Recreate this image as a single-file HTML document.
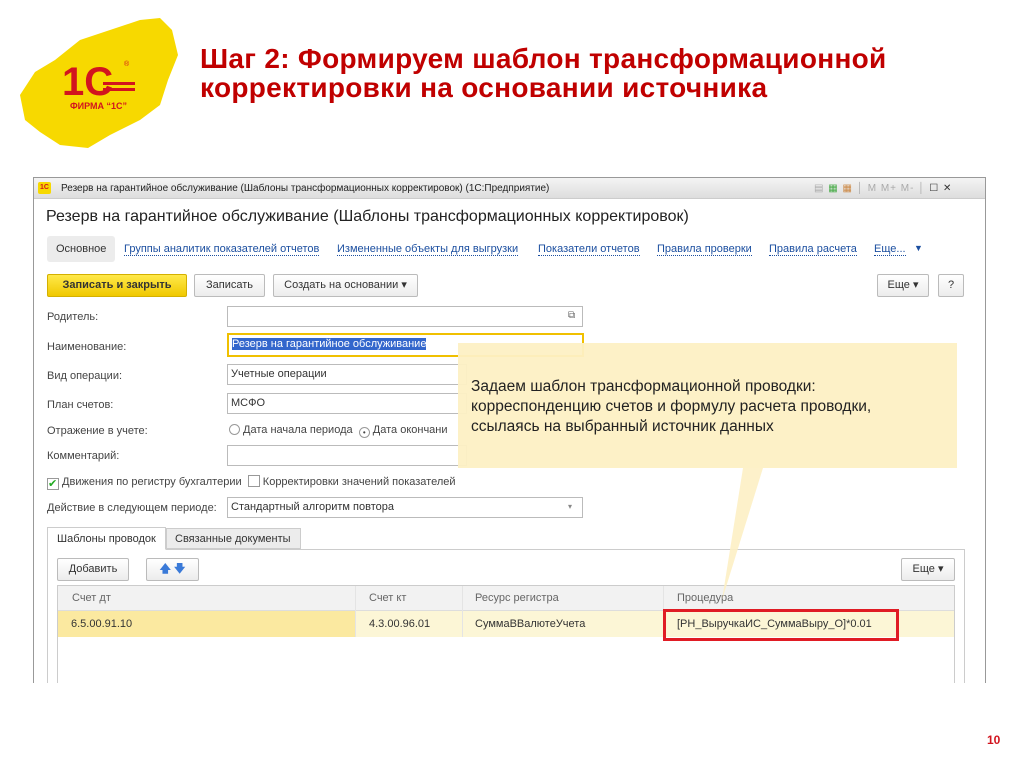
<!DOCTYPE html>
<html><head><meta charset="utf-8"><style>
*{margin:0;padding:0;box-sizing:border-box}
body{width:1024px;height:767px;background:#fff;position:relative;overflow:hidden;font-family:"Liberation Sans",Arial,sans-serif;}
.a{position:absolute;white-space:nowrap}
.s{font-size:11px;color:#444}
.lnk{font-size:11px;color:#1c4fa0;border-bottom:1px dotted #1c4fa0}
.inp{position:absolute;height:21px;border:1px solid #bbb;background:#fff;font-size:11px;color:#333;padding:3px 3px}
.btn{position:absolute;height:23px;border:1px solid #bbb;border-radius:2px;background:linear-gradient(#fff,#ececec);font-size:11px;color:#333;text-align:center;line-height:21px}
</style></head><body>
<svg class="a" style="left:0;top:0" width="200" height="160" viewBox="0 0 200 160">
<path d="M20 95 L35 72 L55 60 L80 40 L110 30 L140 20 L160 18 L172 30 L178 55 L168 80 L160 105 L140 120 L110 135 L88 148 L60 145 L40 132 L25 120 Z" fill="#f7d900"/>
<text x="62" y="95" font-family="Liberation Sans" font-weight="bold" font-size="40" fill="#d2141e">1С</text>
<rect x="103" y="82" width="32" height="3" fill="#d2141e"/>
<rect x="103" y="88" width="32" height="3" fill="#d2141e"/>
<text x="70" y="109" font-family="Liberation Sans" font-weight="bold" font-size="9" fill="#d2141e">ФИРМА “1С”</text>
<text x="124" y="66" font-family="Liberation Sans" font-size="7" fill="#d2141e">®</text>
</svg>
<div class="a" style="left:200px;top:44px;font-size:28px;font-weight:bold;color:#c00000;line-height:29px;letter-spacing:0.3px">Шаг 2: Формируем шаблон трансформационной<br>корректировки на основании источника</div>

<div class="a" style="left:33px;top:177px;width:953px;height:506px;border:1px solid #999;border-bottom:none;background:#fff"></div>
<div class="a" style="left:34px;top:178px;width:951px;height:21px;background:linear-gradient(#f4f4f4,#ddd);border-bottom:1px solid #ccc"></div>
<div class="a" style="left:38px;top:182px;width:13px;height:12px;background:#f7d900;border-radius:2px;font-size:7px;color:#d2141e;font-weight:bold;line-height:12px;text-align:center">1С</div>
<div class="a" style="left:61px;top:183px;font-size:10px;color:#222">Резерв на гарантийное обслуживание (Шаблоны трансформационных корректировок) (1С:Предприятие)</div>
<div class="a" style="left:814px;top:183px;font-size:10px;color:#aaa;letter-spacing:1px">▤ <span style="color:#4a4">▦</span> <span style="color:#c84">▦</span> │ M M+ M- │ <span style="color:#333">☐ ✕</span></div>
<div class="a" style="left:46px;top:208px;font-size:16px;color:#222">Резерв на гарантийное обслуживание (Шаблоны трансформационных корректировок)</div>
<div class="a" style="left:47px;top:236px;width:68px;height:26px;background:#ececec;border-radius:3px"></div>
<div class="a s" style="left:56px;top:243px;color:#333">Основное</div>
<div class="a lnk" style="left:124px;top:243px">Группы аналитик показателей отчетов</div>
<div class="a lnk" style="left:337px;top:243px">Измененные объекты для выгрузки</div>
<div class="a lnk" style="left:538px;top:243px">Показатели отчетов</div>
<div class="a lnk" style="left:657px;top:243px">Правила проверки</div>
<div class="a lnk" style="left:769px;top:243px">Правила расчета</div>
<div class="a lnk" style="left:874px;top:243px">Еще...</div><div class="a" style="left:914px;top:243px;font-size:9px;color:#1c4fa0">▼</div>

<div class="btn" style="left:47px;top:274px;width:140px;background:linear-gradient(#ffe94a,#f0c800);border-color:#d4b000;font-weight:bold;color:#333">Записать и закрыть</div>
<div class="btn" style="left:194px;top:274px;width:71px">Записать</div>
<div class="btn" style="left:273px;top:274px;width:145px">Создать на основании ▾</div>
<div class="btn" style="left:877px;top:274px;width:52px">Еще ▾</div>
<div class="btn" style="left:938px;top:274px;width:26px">?</div>

<div class="a s" style="left:47px;top:311px">Родитель:</div>
<div class="inp" style="left:227px;top:306px;width:356px"></div>
<div class="a" style="left:568px;top:310px;font-size:10px;color:#666">⧉</div>
<div class="a s" style="left:47px;top:341px">Наименование:</div>
<div class="inp" style="left:227px;top:333px;width:357px;height:24px;border:2px solid #f0c000"><span style="background:#3366cc;color:#fff">Резерв на гарантийное обслуживание</span></div>
<div class="a s" style="left:47px;top:370px">Вид операции:</div>
<div class="inp" style="left:227px;top:364px;width:240px">Учетные операции</div>
<div class="a s" style="left:47px;top:399px">План счетов:</div>
<div class="inp" style="left:227px;top:393px;width:240px">МСФО</div>
<div class="a s" style="left:47px;top:425px">Отражение в учете:</div>
<div class="a s" style="left:229px;top:424px"><span style="display:inline-block;width:11px;height:11px;border:1px solid #999;border-radius:50%;vertical-align:-2px"></span> Дата начала периода &nbsp;<span style="display:inline-block;width:11px;height:11px;border:1px solid #999;border-radius:50%;vertical-align:-2px;text-align:center;line-height:9px;font-size:8px">•</span> Дата окончани</div>
<div class="a s" style="left:47px;top:450px">Комментарий:</div>
<div class="inp" style="left:227px;top:445px;width:240px"></div>
<div class="a s" style="left:47px;top:475px"><span style="display:inline-block;width:12px;height:12px;border:1px solid #999;vertical-align:-2px;color:#2a2;font-size:11px;line-height:10px">✔</span> Движения по регистру бухгалтерии &nbsp;<span style="display:inline-block;width:12px;height:12px;border:1px solid #999;vertical-align:-2px"></span> Корректировки значений показателей</div>
<div class="a s" style="left:47px;top:502px">Действие в следующем периоде:</div>
<div class="inp" style="left:227px;top:497px;width:356px">Стандартный алгоритм повтора</div>
<div class="a" style="left:568px;top:502px;font-size:8px;color:#888">▾</div>

<div class="a" style="left:47px;top:549px;width:918px;height:1px;background:#ccc"></div>
<div class="a" style="left:964px;top:549px;width:1px;height:134px;background:#ccc"></div>
<div class="a" style="left:47px;top:527px;width:119px;height:23px;border:1px solid #ccc;border-bottom:1px solid #fff;background:#fff;font-size:11px;color:#333;padding:5px 9px">Шаблоны проводок</div>
<div class="a" style="left:166px;top:528px;width:135px;height:21px;border:1px solid #ccc;background:#ececec;font-size:11px;color:#333;padding:4px 8px">Связанные документы</div>
<div class="a" style="left:47px;top:549px;width:1px;height:134px;background:#ccc"></div>

<div class="btn" style="left:57px;top:558px;width:72px">Добавить</div>
<div class="btn" style="left:146px;top:558px;width:53px;color:#3a7ad8;font-weight:bold">🡅 🡇</div>
<div class="btn" style="left:901px;top:558px;width:54px">Еще ▾</div>

<div class="a" style="left:57px;top:585px;width:898px;height:98px;border:1px solid #ccc;border-bottom:none"></div>
<div class="a" style="left:58px;top:586px;width:896px;height:25px;background:#f2f2f2;border-bottom:1px solid #ddd"></div>
<div class="a s" style="left:72px;top:592px;color:#666">Счет дт</div>
<div class="a s" style="left:369px;top:592px;color:#666">Счет кт</div>
<div class="a s" style="left:475px;top:592px;color:#666">Ресурс регистра</div>
<div class="a s" style="left:677px;top:592px;color:#666">Процедура</div>
<div class="a" style="left:58px;top:611px;width:896px;height:26px;background:#fcf6d6"></div>
<div class="a" style="left:58px;top:611px;width:297px;height:26px;background:#fbe9a0"></div>
<div class="a" style="left:355px;top:586px;width:1px;height:51px;background:#e4e4e4"></div>
<div class="a" style="left:462px;top:586px;width:1px;height:51px;background:#e4e4e4"></div>
<div class="a" style="left:663px;top:586px;width:1px;height:51px;background:#e4e4e4"></div>
<div class="a s" style="left:71px;top:618px;color:#333">6.5.00.91.10</div>
<div class="a s" style="left:369px;top:618px;color:#333">4.3.00.96.01</div>
<div class="a s" style="left:475px;top:618px;color:#333">СуммаВВалютеУчета</div>
<div class="a s" style="left:677px;top:618px;color:#333">[РН_ВыручкаИС_СуммаВыру_О]*0.01</div>
<div class="a" style="left:663px;top:609px;width:236px;height:32px;border:3px solid #e01c24"></div>

<svg class="a" style="left:458px;top:343px" width="500" height="260"><polygon points="285,125 305,125 264,257" fill="#fdf0c4" opacity="0.9"/><rect x="0" y="0" width="499" height="125" fill="#fdf0c4" opacity="0.95"/></svg>
<div class="a" style="left:471px;top:377px;font-size:15.5px;color:#222;line-height:20px">Задаем шаблон трансформационной проводки:<br>корреспонденцию счетов и формулу расчета проводки,<br>ссылаясь на выбранный источник данных</div>
<div class="a" style="left:987px;top:733px;font-size:12px;font-weight:bold;color:#d2141e">10</div>
</body></html>
